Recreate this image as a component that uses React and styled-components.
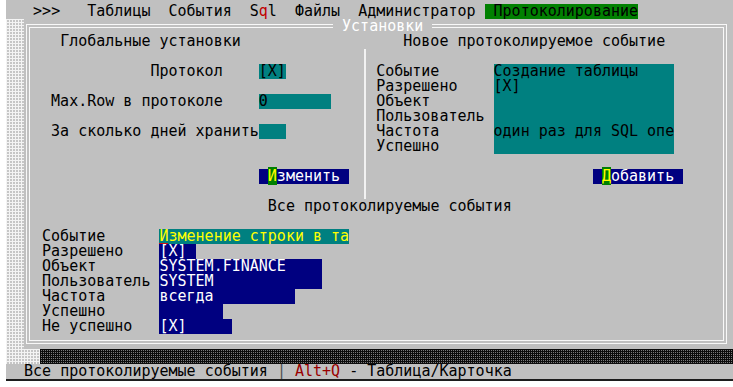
import { Fragment } from "react";
import styled, { createGlobalStyle } from "styled-components";

const GlobalStyle = createGlobalStyle`
  html, body {
    margin: 0;
    padding: 0;
    background: #ffffff;
  }
  body {
    font-family: "DejaVu Sans Mono", "Liberation Mono", monospace;
  }
`;

const Screen = styled.div`
  margin-left: 6px;
  width: 727px;
  height: 381px;
  box-sizing: border-box;
  padding-top: 4px;
  background: #c0c0c0;
  border-bottom: 2px solid #1c1c1c;
  font-family: "DejaVu Sans Mono", "Liberation Mono", monospace;
  font-size: 15px;
  line-height: 15px;
  color: #000;
  white-space: pre;
  overflow: hidden;
`;

/* ---------- menu ---------- */
const MenuBar = styled.div`
  display: flex;
  height: 15px;
  padding-left: 3ch;
`;

const MenuItem = styled.span`
  margin-right: ${(p) => (p.$gap !== undefined ? p.$gap : 2)}ch;
  padding-left: ${(p) => (p.$active ? 1 : 0)}ch;
  background: ${(p) => (p.$active ? "#008000" : "transparent")};
`;

const Hot = styled.span`
  color: #c00000;
`;

/* ---------- window ---------- */
const Main = styled.div`
  display: flex;
  height: 330px;
`;

const lightDots = `
  background-color: #c6c6c6;
  background-image:
    linear-gradient(90deg, #f4f4f4 1px, transparent 1px),
    linear-gradient(#f4f4f4 1px, transparent 1px);
  background-size: 3px 3px;
`;

const Shade = styled.div`
  width: ${(p) => p.$w || "2ch"};
  flex-shrink: 0;
  ${lightDots}
`;

const Frame = styled.div`
  position: relative;
  box-sizing: border-box;
  margin: 5px 0 0 2px;
  width: 701px;
  height: 320px;
  border: 4px double #f8f8f8;
  padding: 6px 0 0 3px;
`;

const FrameTitle = styled.div`
  position: absolute;
  top: -9px;
  left: 303px;
  height: 15px;
  padding: 0 1ch;
  background: #c0c0c0;
  color: #ffffff;
`;

const TopSection = styled.div`
  display: flex;
  height: 165px;
`;

const Panel = styled.div`
  display: flex;
  flex-direction: column;
  width: ${(p) => p.$w || "auto"};
  flex-shrink: 0;
`;

const Heading = styled.div`
  height: 15px;
  padding-left: ${(p) => p.$indent}ch;
`;

const FieldRow = styled.div`
  display: flex;
  height: 15px;
  margin-top: ${(p) => p.$mt || 15}px;
`;

const Label = styled.span`
  box-sizing: border-box;
  width: 25ch;
  padding-left: ${(p) => p.$indent}ch;
`;

const Field = styled.span`
  width: ${(p) => p.$w}ch;
  background: #008080;
  color: #000;
`;

const ButtonRow = styled.div`
  height: 15px;
  margin-top: ${(p) => p.$mt || 15}px;
  padding-left: ${(p) => p.$indent}ch;
`;

const Button = styled.span`
  display: inline-block;
  width: 10ch;
  padding-left: 1ch;
  box-sizing: border-box;
  background: #000080;
  color: #ffffff;
`;

const Accel = styled.span`
  background: #008000;
  color: #ffff00;
`;

const Divider = styled.div`
  width: 1ch;
  height: 150px;
  margin-top: 15px;
  display: flex;
  justify-content: center;
  flex-shrink: 0;

  &::before {
    content: "";
    width: 2px;
    margin-left: 5px;
    background: #f2f2f2;
  }
`;

const EventForm = styled.div`
  display: grid;
  grid-template-columns: 13ch 20ch;
  grid-auto-rows: 15px;
  margin-top: 15px;
  padding-left: 1ch;
`;

const FormValue = styled.span`
  background: #008080;
`;

/* ---------- list ---------- */
const ListTitle = styled.div`
  height: 15px;
  padding-left: 26ch;
`;

const EventList = styled.div`
  display: grid;
  grid-template-columns: 13ch auto;
  grid-auto-rows: 15px;
  margin-top: 15px;
  padding-left: 1ch;
`;

const ListValue = styled.span`
  width: ${(p) => p.$w}ch;
  background: ${(p) => (p.$current ? "#008080" : "#000080")};
  color: ${(p) => (p.$current ? "#ffff00" : "#ffffff")};
`;

const Cursor = styled.span`
  box-shadow: inset 0 -2px 0 #d01010;
`;

/* ---------- bottom ---------- */
const HatchRow = styled.div`
  display: flex;
  height: 15px;
`;

const Hatch = styled.div`
  flex: 1;
  background-color: #7a7a7a;
  background-image:
    linear-gradient(90deg, #0c0c0c 1px, transparent 1px),
    linear-gradient(#0c0c0c 1px, transparent 1px);
  background-size: 2px 2px;
`;

const StatusBar = styled.div`
  height: 15px;
  padding-left: 2ch;
`;

const Sep = styled.span`
  color: #505050;
`;

const Key = styled.span`
  color: #9a0000;
`;

const formRows = [
  ["Событие", "Создание таблицы"],
  ["Разрешено", "[X]"],
  ["Объект", ""],
  ["Пользователь", ""],
  ["Частота", "один раз для SQL опе"],
  ["Успешно", ""],
];

const listRows = [
  ["Разрешено", "[X]", 4],
  ["Объект", "SYSTEM.FINANCE", 18],
  ["Пользователь", "SYSTEM", 18],
  ["Частота", "всегда", 15],
  ["Успешно", "", 7],
  ["Не успешно", "[X]", 8],
];

export default function App() {
  return (
    <>
      <GlobalStyle />
      <Screen>
        <MenuBar>
          <MenuItem $gap={3}>&gt;&gt;&gt;</MenuItem>
          <MenuItem>Таблицы</MenuItem>
          <MenuItem>События</MenuItem>
          <MenuItem>
            S<Hot>q</Hot>l
          </MenuItem>
          <MenuItem>Файлы</MenuItem>
          <MenuItem $gap={1}>Администратор</MenuItem>
          <MenuItem $active $gap={0}>
            Протоколирование
          </MenuItem>
        </MenuBar>

        <Main>
          <Shade />
          <Frame>
            <FrameTitle>Установки</FrameTitle>

            <TopSection>
              <Panel $w="36ch">
                <Heading $indent={3}>Глобальные установки</Heading>
                <FieldRow>
                  <Label $indent={13}>Протокол</Label>
                  <Field $w={3}>[X]</Field>
                </FieldRow>
                <FieldRow>
                  <Label $indent={2}>Max.Row в протоколе</Label>
                  <Field $w={8}>0</Field>
                </FieldRow>
                <FieldRow>
                  <Label $indent={2}>За сколько дней хранить</Label>
                  <Field $w={3} />
                </FieldRow>
                <ButtonRow $mt={30} $indent={25}>
                  <Button>
                    <Accel>И</Accel>зменить
                  </Button>
                </ButtonRow>
              </Panel>

              <Divider />

              <Panel>
                <Heading $indent={4}>Новое протоколируемое событие</Heading>
                <EventForm>
                  {formRows.map(([label, value]) => (
                    <Fragment key={label}>
                      <span>{label}</span>
                      <FormValue>{value}</FormValue>
                    </Fragment>
                  ))}
                </EventForm>
                <ButtonRow $indent={25}>
                  <Button>
                    <Accel>Д</Accel>обавить
                  </Button>
                </ButtonRow>
              </Panel>
            </TopSection>

            <ListTitle>Все протоколируемые события</ListTitle>

            <EventList>
              <span>Событие</span>
              <ListValue $current $w={21}>
                <Cursor>И</Cursor>зменение строки в та
              </ListValue>
              {listRows.map(([label, value, w]) => (
                <Fragment key={label}>
                  <span>{label}</span>
                  <ListValue $w={w}>{value}</ListValue>
                </Fragment>
              ))}
            </EventList>
          </Frame>
        </Main>

        <HatchRow>
          <Shade $w="34px" />
          <Hatch />
        </HatchRow>

        <StatusBar>
          Все протоколируемые события <Sep>|</Sep> <Key>Alt+Q</Key> - Таблица/Карточка
        </StatusBar>
      </Screen>
    </>
  );
}
